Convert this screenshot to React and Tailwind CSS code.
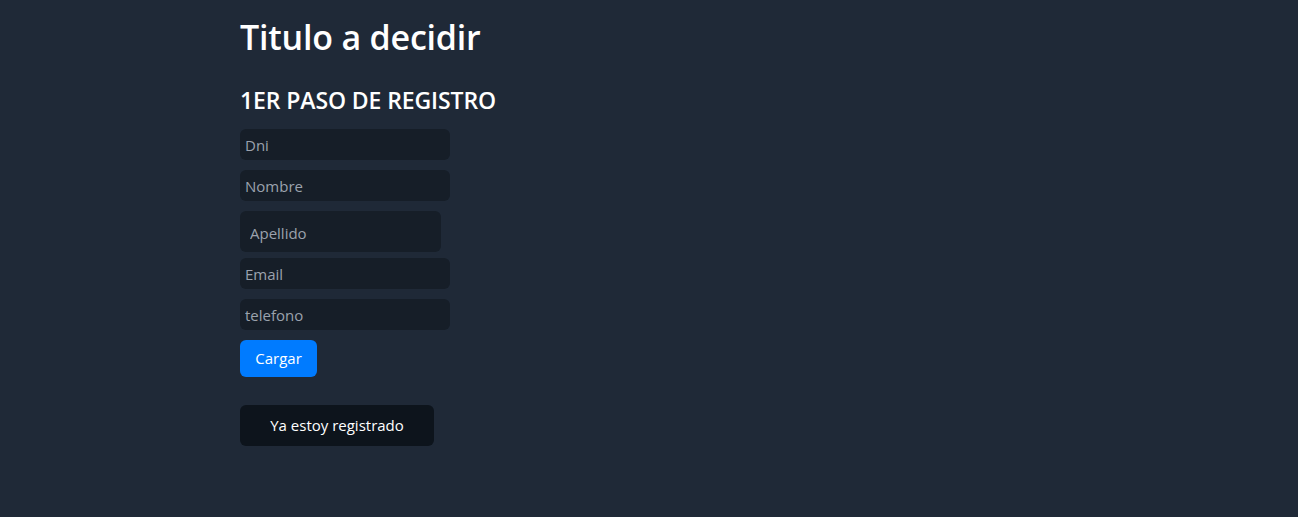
export default function App() {
  const fields = ['Dni', 'Nombre']
  return (
    <div className="min-h-[517px] w-full bg-[#1f2937] font-['Open_Sans',sans-serif] text-white">
      <div className="ml-[240px] flex flex-col items-start pt-[14px]">
        <h1 className="text-[34px] font-semibold leading-[46px] tracking-[-0.2px]">Titulo a decidir</h1>
        <h2 className="mt-[26px] text-[23px] font-semibold leading-[28px] tracking-[-0.1px]">1ER PASO DE REGISTRO</h2>
        <div className="mt-[15px] flex flex-col items-start gap-[10px]">
          {fields.map((f) => (
            <input
              key={f}
              placeholder={f}
              className="h-[31px] w-[210px] rounded-[6px] bg-[#161e28] px-[5px] text-[15px] text-gray-300 placeholder:text-[#9ba2ad] outline-none"
            />
          ))}
          <input
            placeholder="Apellido"
            className="h-[41px] w-[201px] rounded-[6px] bg-[#161e28] px-[10px] pt-[2px] text-[15px] text-gray-300 placeholder:text-[#9ba2ad] outline-none"
          />
          <div className="-mt-[4px] flex flex-col gap-[10px]">
            {['Email', 'telefono'].map((f) => (
              <input
                key={f}
                placeholder={f}
                className="h-[31px] w-[210px] rounded-[6px] bg-[#161e28] px-[5px] text-[15px] text-gray-300 placeholder:text-[#9ba2ad] outline-none"
              />
            ))}
          </div>
          <button className="h-[37px] w-[77px] rounded-[6px] bg-[#007bff] text-[15px] text-white">
            Cargar
          </button>
          <button className="mt-[18px] h-[41px] w-[194px] rounded-[6px] bg-[#0d141c] text-[15px] text-white">
            Ya estoy registrado
          </button>
        </div>
      </div>
    </div>
  )
}
